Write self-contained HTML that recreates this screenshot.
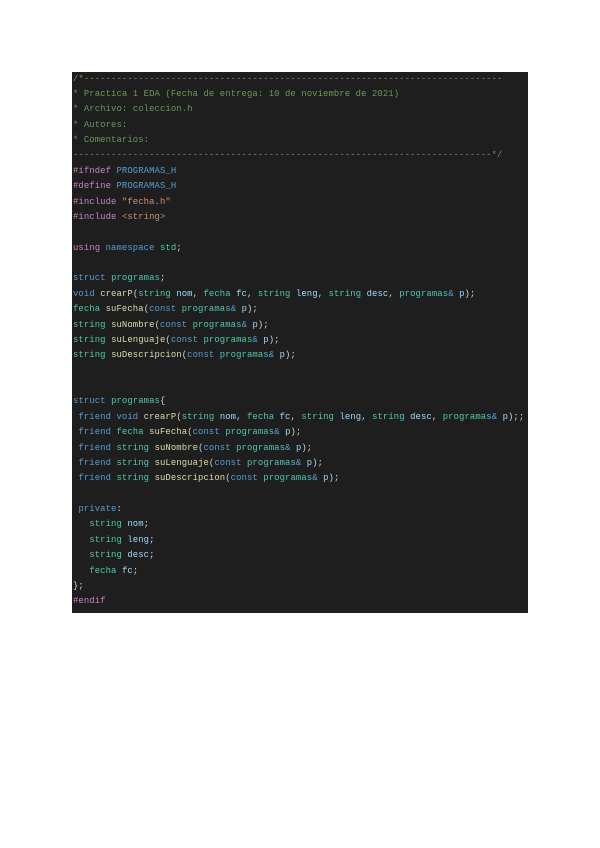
<!DOCTYPE html>
<html><head><style>
body{margin:0;background:#fff;width:600px;height:848px;position:relative}
#c{position:absolute;left:72px;top:72px;width:456px;height:541px;background:#1e1e1e;overflow:hidden}
pre{margin:0;position:absolute;left:1px;top:-0.5px;font-family:"Liberation Mono",monospace;font-size:8.9px;letter-spacing:0.11px;line-height:15.37px;color:#d4d4d4;white-space:pre}
.g{color:#6a9955}.k{color:#569cd6}.p{color:#c586c0}.t{color:#4ec9b0}.f{color:#dcdcaa}.v{color:#9cdcfe}.s{color:#ce9178}.m{color:#4fc1ff}
</style></head><body><div id="c"><pre><span class="g">/*-----------------------------------------------------------------------------
* Practica 1 EDA (Fecha de entrega: 10 de noviembre de 2021)
* Archivo: coleccion.h
* Autores:
* Comentarios:
-----------------------------------------------------------------------------*/</span>
<span class="p">#ifndef</span> <span class="k">PROGRAMAS_H</span>
<span class="p">#define</span> <span class="k">PROGRAMAS_H</span>
<span class="p">#include</span> <span class="s">"fecha.h"</span>
<span class="p">#include</span> <span class="s">&lt;string&gt;</span>

<span class="p">using</span> <span class="k">namespace</span> <span class="t">std</span>;

<span class="k">struct</span> <span class="t">programas</span>;
<span class="k">void</span> <span class="f">crearP</span>(<span class="t">string</span> <span class="v">nom</span>, <span class="t">fecha</span> <span class="v">fc</span>, <span class="t">string</span> <span class="v">leng</span>, <span class="t">string</span> <span class="v">desc</span>, <span class="t">programas</span><span class="k">&amp;</span> <span class="v">p</span>);
<span class="t">fecha</span> <span class="f">suFecha</span>(<span class="k">const</span> <span class="t">programas</span><span class="k">&amp;</span> <span class="v">p</span>);
<span class="t">string</span> <span class="f">suNombre</span>(<span class="k">const</span> <span class="t">programas</span><span class="k">&amp;</span> <span class="v">p</span>);
<span class="t">string</span> <span class="f">suLenguaje</span>(<span class="k">const</span> <span class="t">programas</span><span class="k">&amp;</span> <span class="v">p</span>);
<span class="t">string</span> <span class="f">suDescripcion</span>(<span class="k">const</span> <span class="t">programas</span><span class="k">&amp;</span> <span class="v">p</span>);


<span class="k">struct</span> <span class="t">programas</span>{
 <span class="k">friend</span> <span class="k">void</span> <span class="f">crearP</span>(<span class="t">string</span> <span class="v">nom</span>, <span class="t">fecha</span> <span class="v">fc</span>, <span class="t">string</span> <span class="v">leng</span>, <span class="t">string</span> <span class="v">desc</span>, <span class="t">programas</span><span class="k">&amp;</span> <span class="v">p</span>);;
 <span class="k">friend</span> <span class="t">fecha</span> <span class="f">suFecha</span>(<span class="k">const</span> <span class="t">programas</span><span class="k">&amp;</span> <span class="v">p</span>);
 <span class="k">friend</span> <span class="t">string</span> <span class="f">suNombre</span>(<span class="k">const</span> <span class="t">programas</span><span class="k">&amp;</span> <span class="v">p</span>);
 <span class="k">friend</span> <span class="t">string</span> <span class="f">suLenguaje</span>(<span class="k">const</span> <span class="t">programas</span><span class="k">&amp;</span> <span class="v">p</span>);
 <span class="k">friend</span> <span class="t">string</span> <span class="f">suDescripcion</span>(<span class="k">const</span> <span class="t">programas</span><span class="k">&amp;</span> <span class="v">p</span>);

 <span class="k">private</span>:
   <span class="t">string</span> <span class="v">nom</span>;
   <span class="t">string</span> <span class="v">leng</span>;
   <span class="t">string</span> <span class="v">desc</span>;
   <span class="t">fecha</span> <span class="v">fc</span>;
};
<span class="p">#endif</span></pre></div></body></html>
